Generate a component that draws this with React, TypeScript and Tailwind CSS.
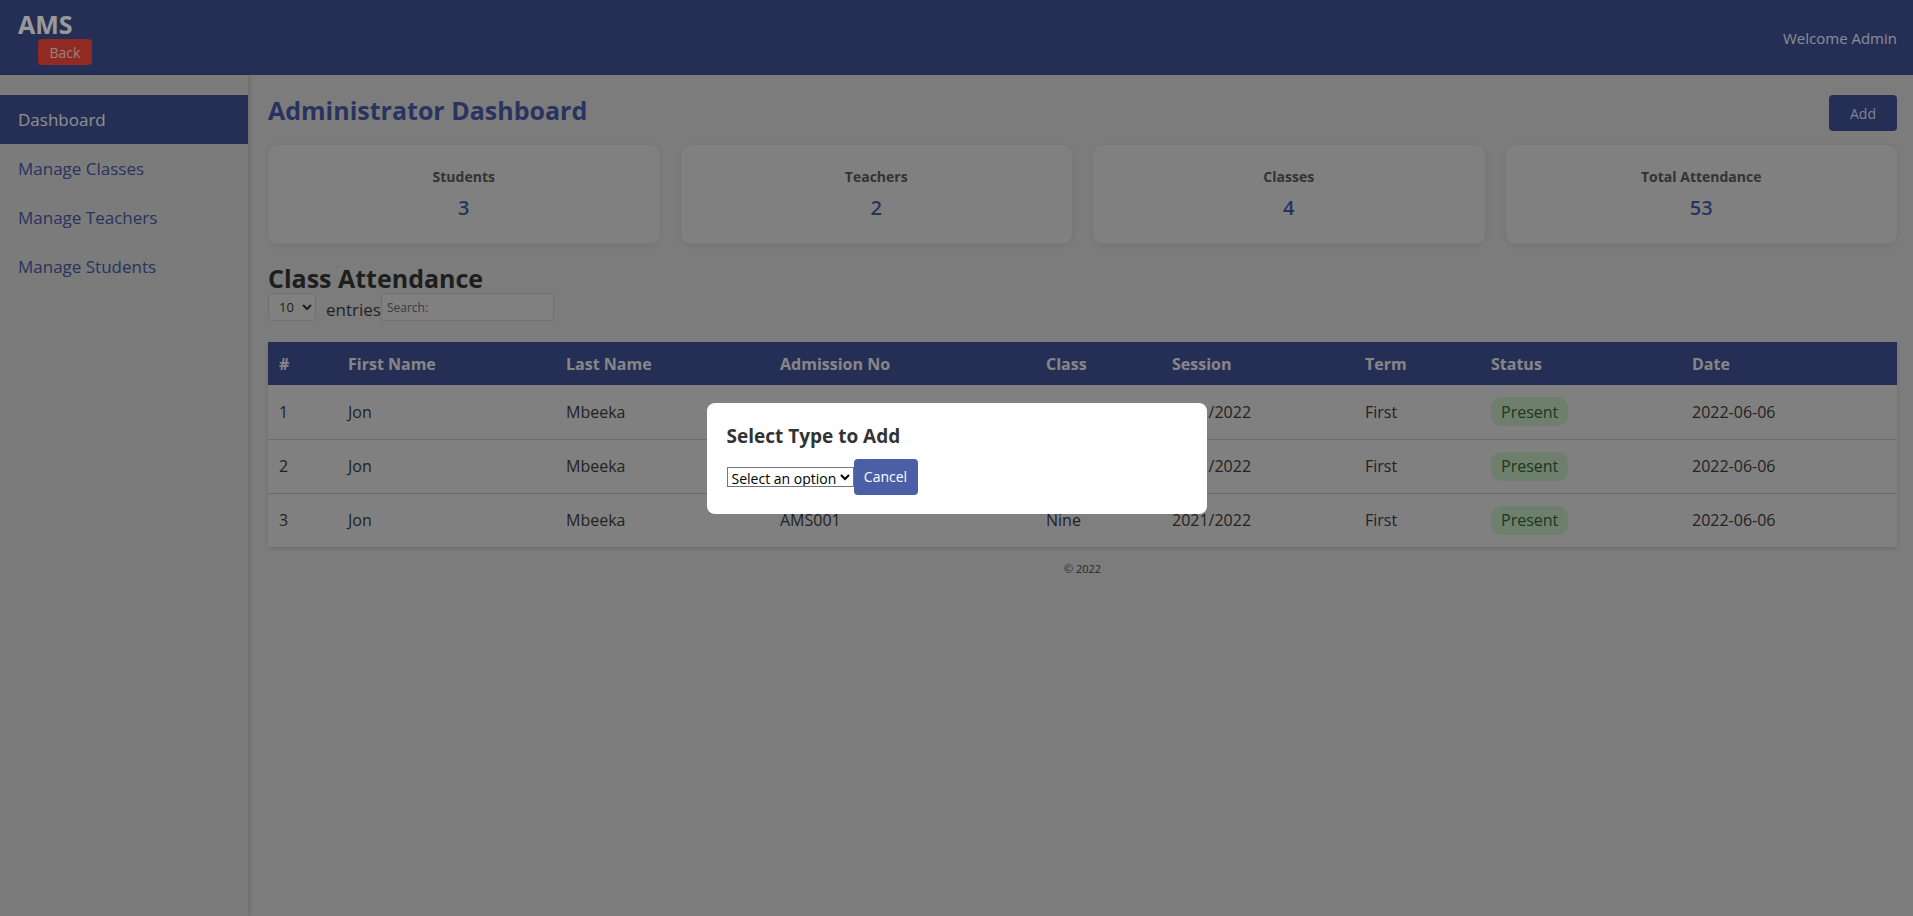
import { useState } from 'react'

const rows = [
  { id: 1, first: 'Jon', last: 'Mbeeka', adm: 'AMS001', cls: 'Nine', session: '2021/2022', term: 'First', status: 'Present', date: '2022-06-06' },
  { id: 2, first: 'Jon', last: 'Mbeeka', adm: 'AMS001', cls: 'Nine', session: '2021/2022', term: 'First', status: 'Present', date: '2022-06-06' },
  { id: 3, first: 'Jon', last: 'Mbeeka', adm: 'AMS001', cls: 'Nine', session: '2021/2022', term: 'First', status: 'Present', date: '2022-06-06' },
]

const stats = [
  { label: 'Students', value: 3 },
  { label: 'Teachers', value: 2 },
  { label: 'Classes', value: 4 },
  { label: 'Total Attendance', value: 53 },
]

const menu = ['Dashboard', 'Manage Classes', 'Manage Teachers', 'Manage Students']

export default function App() {
  const [active, setActive] = useState('Dashboard')
  const [showModal, setShowModal] = useState(true)

  return (
    <div className="flex min-h-screen flex-col bg-[#cfcfcf] font-['Open_Sans',sans-serif]">
      {/* Header */}
      <header className="flex h-[75px] shrink-0 items-start justify-between bg-[#3e4e8e] pl-[18px] pr-[16px]">
        <div className="flex flex-col pt-[9px]">
          <span className="text-[25px] font-bold leading-[30px] text-white">AMS</span>
          <button className="ml-[20px] h-[26px] w-[54px] rounded-[4px] bg-[#f0463a] text-[14px] text-[#ffd9d6]">
            Back
          </button>
        </div>
        <span className="mt-[27px] text-[15px] text-[#e4e9f8]">Welcome Admin</span>
      </header>

      <div className="flex flex-1">
        {/* Sidebar */}
        <aside className="w-[248px] shrink-0 bg-[#cdcdcd] pt-[20px] shadow-[2px_0_4px_rgba(0,0,0,0.12)]">
          {menu.map((item) => (
            <div
              key={item}
              onClick={() => setActive(item)}
              className={
                active === item
                  ? 'flex h-[49px] cursor-pointer items-center bg-[#3e4e8e] px-[18px] text-[17px] text-[#f0f0f0]'
                  : 'flex h-[49px] cursor-pointer items-center px-[18px] text-[17px] text-[#44569f]'
              }
            >
              {item}
            </div>
          ))}
        </aside>

        {/* Main */}
        <main className="flex-1 pl-[20px] pr-[16px] pt-[20px]">
          <div className="flex items-start justify-between">
            <h1 className="text-[25px] font-bold leading-[30px] text-[#44579f]">Administrator Dashboard</h1>
            <button onClick={() => setShowModal(true)} className="h-[36px] w-[68px] rounded-[4px] bg-[#3e4e8e] text-[14px] text-[#d5dbf0]">
              Add
            </button>
          </div>

          <div className="mt-[14px] grid grid-cols-4 gap-[21px]">
            {stats.map((s) => (
              <div key={s.label} className="flex h-[99px] flex-col items-center justify-center rounded-[10px] bg-[#d5d5d5] shadow-[0_2px_6px_rgba(0,0,0,0.08)]">
                <span className="text-[14px] font-bold text-[#555]">{s.label}</span>
                <span className="mt-[6px] text-[20px] font-semibold text-[#44579f]">{s.value}</span>
              </div>
            ))}
          </div>

          <h2 className="mt-[20px] text-[25px] font-bold leading-[28px] text-[#323232]">Class Attendance</h2>
          <div className="flex items-end">
            <select className="mt-[1px] h-[28px] w-[48px] rounded-[4px] border border-[#bbb] bg-[#d5d5d5] pl-[6px] text-[13px] text-[#333]">
              <option>10</option>
              <option>25</option>
              <option>50</option>
            </select>
            <span className="ml-[10px] text-[17px] leading-[22px] text-[#393939]">entries</span>
            <input
              placeholder="Search:"
              className="h-[28px] w-[173px] rounded-[2px] border border-[#bbb] bg-[#d5d5d5] px-[5px] text-[12px] text-[#333] placeholder:text-[#666]"
            />
          </div>

          <table className="mt-[21px] w-full table-fixed border-collapse bg-[#d5d5d5] shadow-[0_2px_4px_rgba(0,0,0,0.12)]">
            <colgroup>
              <col className="w-[69px]" />
              <col className="w-[218px]" />
              <col className="w-[214px]" />
              <col className="w-[266px]" />
              <col className="w-[126px]" />
              <col className="w-[193px]" />
              <col className="w-[126px]" />
              <col className="w-[201px]" />
              <col />
            </colgroup>
            <thead>
              <tr className="h-[43px] bg-[#3f4e8e] text-left text-[16px] text-[#e0e0e0]">
                {['#', 'First Name', 'Last Name', 'Admission No', 'Class', 'Session', 'Term', 'Status', 'Date'].map((h) => (
                  <th key={h} className="px-[11px] font-bold">{h}</th>
                ))}
              </tr>
            </thead>
            <tbody>
              {rows.map((r) => (
                <tr key={r.id} className="h-[54px] border-b border-[#b5b5b5] text-[16px] text-[#393939] last:border-b-0">
                  <td className="px-[11px]">{r.id}</td>
                  <td className="px-[11px]">{r.first}</td>
                  <td className="px-[11px]">{r.last}</td>
                  <td className="px-[11px]">{r.adm}</td>
                  <td className="px-[11px]">{r.cls}</td>
                  <td className="px-[11px]">{r.session}</td>
                  <td className="px-[11px]">{r.term}</td>
                  <td className="px-[11px]">
                    <span className="inline-flex h-[29px] items-center rounded-[10px] bg-[#b8d4b8] px-[10px] text-[#2f602f]">{r.status}</span>
                  </td>
                  <td className="px-[11px]">{r.date}</td>
                </tr>
              ))}
            </tbody>
          </table>

          <p className="mt-[14px] text-center text-[11px] text-[#444]">© 2022</p>
        </main>
      </div>

      {/* Modal */}
      {showModal && (
        <div className="fixed inset-0 flex items-center justify-center bg-black/40">
          <div className="w-[500px] rounded-[8px] bg-white px-[20px] pb-[19px] pt-[21px]">
            <h3 className="text-[19px] font-bold leading-[24px] text-[#333]">Select Type to Add</h3>
            <div className="mt-[11px] flex items-center">
              <select className="h-[20px] border border-[#767676] bg-white text-[14px] leading-[18px] text-black">
                <option>Select an option</option>
                <option>Class</option>
                <option>Teacher</option>
                <option>Student</option>
              </select>
              <button onClick={() => setShowModal(false)} className="h-[36px] w-[64px] rounded-[4px] bg-[#4a5fa6] text-[14px] text-white">
                Cancel
              </button>
            </div>
          </div>
        </div>
      )}
    </div>
  )
}
